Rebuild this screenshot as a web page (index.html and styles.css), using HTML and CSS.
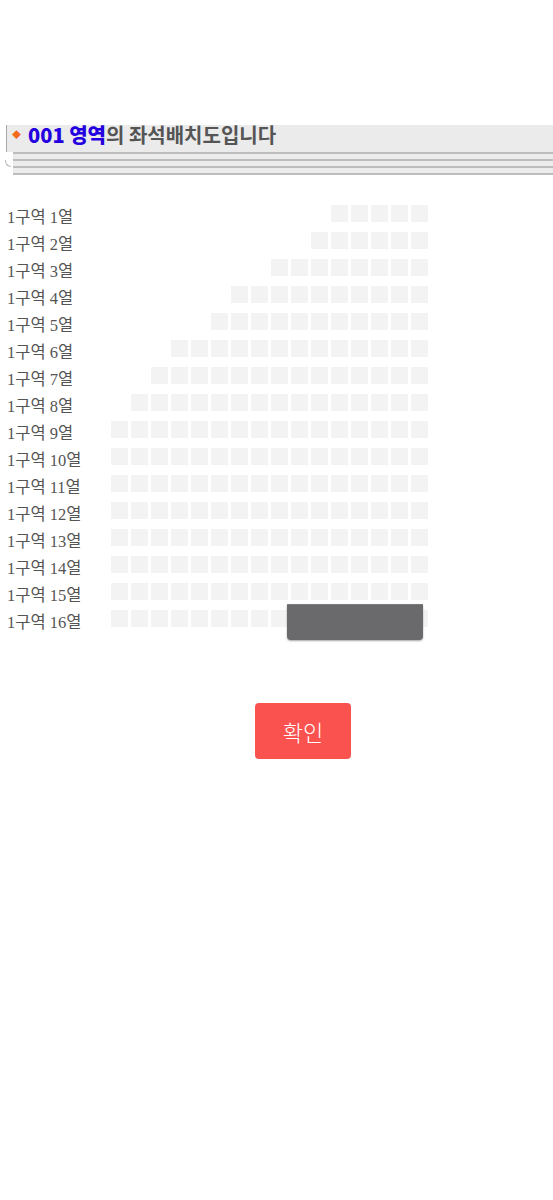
FILE: index.html
```html
<!DOCTYPE html>
<html>
<head>
<meta charset="utf-8" />
<title>좌석배치도</title>
<link rel="stylesheet" href="styles.css">
</head>
<body>
    <div class="html_title">
        <div class="title_bar">
            <span class="title_mark">◆</span>
            <h4><b>001 영역</b>의 좌석배치도입니다</h4>
        </div>
        <div class="title_foot">
            <span class="title_curl"></span>
            <div class="title_lines"></div>
        </div>
    </div>
    <div id="seat_map">
        <div class="seat_row"><span class="row_name">1구역 1열</span><div class="seats" data-n="5"></div></div>
        <div class="seat_row"><span class="row_name">1구역 2열</span><div class="seats" data-n="6"></div></div>
        <div class="seat_row"><span class="row_name">1구역 3열</span><div class="seats" data-n="8"></div></div>
        <div class="seat_row"><span class="row_name">1구역 4열</span><div class="seats" data-n="10"></div></div>
        <div class="seat_row"><span class="row_name">1구역 5열</span><div class="seats" data-n="11"></div></div>
        <div class="seat_row"><span class="row_name">1구역 6열</span><div class="seats" data-n="13"></div></div>
        <div class="seat_row"><span class="row_name">1구역 7열</span><div class="seats" data-n="14"></div></div>
        <div class="seat_row"><span class="row_name">1구역 8열</span><div class="seats" data-n="15"></div></div>
        <div class="seat_row"><span class="row_name">1구역 9열</span><div class="seats" data-n="16"></div></div>
        <div class="seat_row"><span class="row_name">1구역 10열</span><div class="seats" data-n="16"></div></div>
        <div class="seat_row"><span class="row_name">1구역 11열</span><div class="seats" data-n="16"></div></div>
        <div class="seat_row"><span class="row_name">1구역 12열</span><div class="seats" data-n="16"></div></div>
        <div class="seat_row"><span class="row_name">1구역 13열</span><div class="seats" data-n="16"></div></div>
        <div class="seat_row"><span class="row_name">1구역 14열</span><div class="seats" data-n="16"></div></div>
        <div class="seat_row"><span class="row_name">1구역 15열</span><div class="seats" data-n="16"></div></div>
        <div class="seat_row last_row"><span class="row_name">1구역 16열</span><div class="seats" data-n="16"><div class="seat_cover"></div></div></div>
    </div>
    <div class="btn_box">
        <input type="button" class="btn_sure" value="확인" />
    </div>
    <script>
        var rows = document.querySelectorAll('.seats');
        for (var i = 0; i < rows.length; i++) {
            var n = parseInt(rows[i].getAttribute('data-n'));
            for (var k = 0; k < n; k++) {
                var s = document.createElement('span');
                s.className = 'seat';
                rows[i].appendChild(s);
            }
        }
    </script>
</body>
</html>
```

FILE: styles.css
```css
* {
    margin:0;
    padding:0;
    font-family:"Noto Sans CJK KR", sans-serif;
}
body,html {
    width:100%;
    background:#fff;
}
.html_title {
    margin-top:125px;
}
.title_bar {
    height:27px;
    margin-left:6px;
    background:#ebebeb;
    border-left:1px solid #a8a8a8;
    display:flex;
    align-items:flex-start;
}
.title_mark {
    color:#f26a1b;
    font-size:9px;
    line-height:20px;
    margin-left:5px;
    margin-right:7px;
}
.title_bar h4 {
    font-size:20px;
    font-weight:bold;
    color:#555;
    line-height:20px;
    letter-spacing:0;
}
.title_bar h4 b {
    color:#2400e0;
}
.title_foot {
    display:flex;
    height:23px;
}
.title_curl {
    width:5px;
    height:6px;
    margin:8px 2px 0 5px;
    border-left:1px solid #b8b8b8;
    border-bottom:1px solid #b8b8b8;
    border-bottom-left-radius:6px;
}
.title_lines {
    flex:1;
    height:23px;
    background:repeating-linear-gradient(to bottom, #bdbdbd 0 2px, #ececec 2px 7px);
}
#seat_map {
    margin-top:30px;
    padding-left:7px;
    display:flex;
    flex-direction:column;
    gap:10px;
}
.seat_row {
    display:flex;
    height:17px;
}
.row_name {
    width:104px;
    font-family:"Liberation Serif", "Noto Sans CJK KR", serif;
    font-size:16.5px;
    color:#555;
    line-height:17px;
    margin-top:4px;
    white-space:nowrap;
}
.seats {
    width:317px;
    display:flex;
    justify-content:flex-end;
    gap:3px;
    position:relative;
}
.seat {
    display:block;
    width:17px;
    height:17px;
    background:#f3f3f3;
}
.seat_cover {
    position:absolute;
    left:176px;
    top:-6px;
    width:136px;
    height:35px;
    background:#6a6a6d;
    border-top:1px solid #7a7a7c;
    border-radius:1px 1px 4px 4px;
    box-shadow:0 1px 2px rgba(0,0,0,0.35);
}
.btn_box {
    margin-top:76px;
    padding-left:255px;
}
.btn_sure {
    width:96px;
    height:56px;
    border:none;
    border-radius:4px;
    background:#fa524f;
    color:#fff;
    font-size:22px;
    font-weight:300;
    font-family:"Noto Sans CJK KR", sans-serif;
}
```
